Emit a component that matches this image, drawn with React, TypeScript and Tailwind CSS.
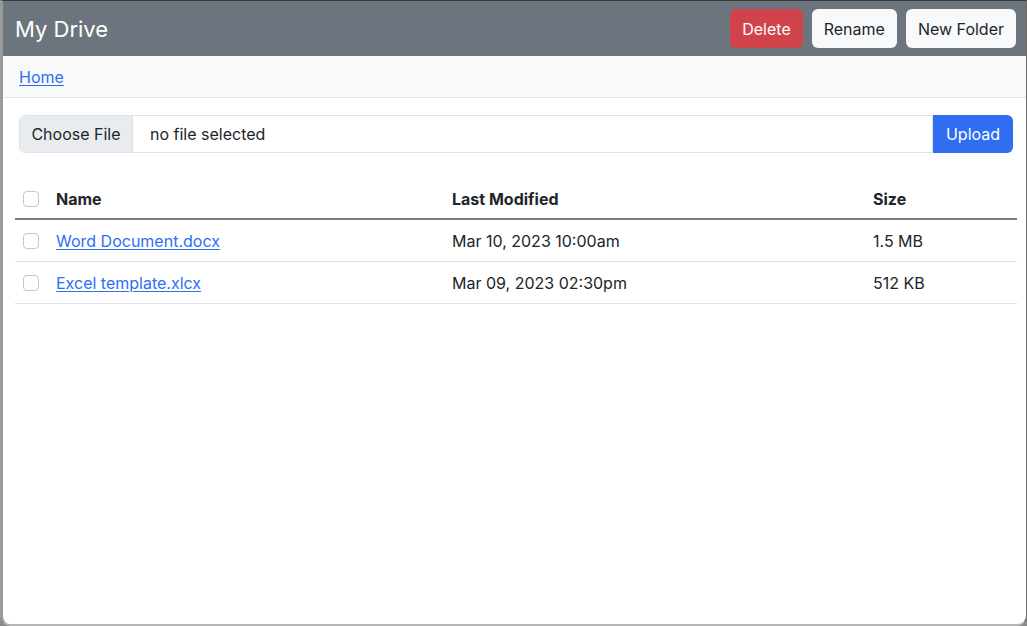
import React from 'react';

interface DriveFile {
  name: string;
  modified: string;
  size: string;
}

const files: DriveFile[] = [
  { name: 'Word Document.docx', modified: 'Mar 10, 2023 10:00am', size: '1.5 MB' },
  { name: 'Excel template.xlcx', modified: 'Mar 09, 2023 02:30pm', size: '512 KB' },
];

function Checkbox() {
  return <span className="block w-4 h-4 rounded-[4px] border border-[#c4c8cc] bg-white" />;
}

export default function App() {
  return (
    <div
      className="h-[626px] w-full bg-[#8a8a8a] text-[#212529]"
      style={{ fontFamily: 'Inter, "Liberation Sans", sans-serif' }}
    >
      <div className="h-full flex flex-col bg-white border-t border-t-[#3a3a3a] border-l-[3px] border-l-[#9a9a9a] border-r border-r-[#6a6a6a] border-b-2 border-b-[#b5b5b5] rounded-b-[10px] overflow-hidden">
        {/* Top bar */}
        <div className="h-[55px] shrink-0 bg-[#6c757d] flex items-center justify-between pl-[12px] pr-[10px]">
          <h1 className="text-[22px] text-white leading-none">My Drive</h1>
          <div className="flex items-center gap-[9px]">
            <button className="h-[39px] px-3 rounded-[6px] bg-[#d0434a] text-white text-[16px]">Delete</button>
            <button className="h-[39px] px-3 rounded-[6px] bg-[#f8f9fa] text-[#212529] text-[16px]">Rename</button>
            <button className="h-[39px] px-3 rounded-[6px] bg-[#f8f9fa] text-[#212529] text-[16px]">New Folder</button>
          </div>
        </div>

        {/* Breadcrumb */}
        <div className="h-[42px] shrink-0 bg-[#f8f9fa] border-b border-[#e3e5e8] flex items-center pl-[16px]">
          <a href="#" className="text-[16px] text-[#2f6ef3] underline underline-offset-2">Home</a>
        </div>

        {/* Upload */}
        <div className="mt-[17px] ml-[16px] mr-[13px] flex h-[38px] text-[16px]">
          <div className="flex-1 flex rounded-l-[6px] border border-[#dee2e6] overflow-hidden">
            <div className="w-[113px] bg-[#e9ecef] border-r border-[#dee2e6] flex items-center justify-center">Choose File</div>
            <div className="flex items-center pl-[17px]">no file selected</div>
          </div>
          <button className="w-[80px] rounded-r-[6px] bg-[#2f6ef3] text-white">Upload</button>
        </div>

        {/* Table */}
        <div className="mt-[27px] ml-[12px] mr-[9px] text-[16px]">
          <div className="grid grid-cols-[33px_396px_421px_1fr] h-[40px] items-center border-b-2 border-[#7a7a7a] font-bold">
            <div className="pl-2"><Checkbox /></div>
            <div className="px-2">Name</div>
            <div className="px-2">Last Modified</div>
            <div className="px-2">Size</div>
          </div>
          {files.map((f) => (
            <div key={f.name} className="grid grid-cols-[33px_396px_421px_1fr] h-[42px] items-center border-b border-[#dee2e6]">
              <div className="pl-2"><Checkbox /></div>
              <div className="px-2">
                <a href="#" className="text-[#2f6ef3] underline underline-offset-2">{f.name}</a>
              </div>
              <div className="px-2">{f.modified}</div>
              <div className="px-2">{f.size}</div>
            </div>
          ))}
        </div>
      </div>
    </div>
  );
}
